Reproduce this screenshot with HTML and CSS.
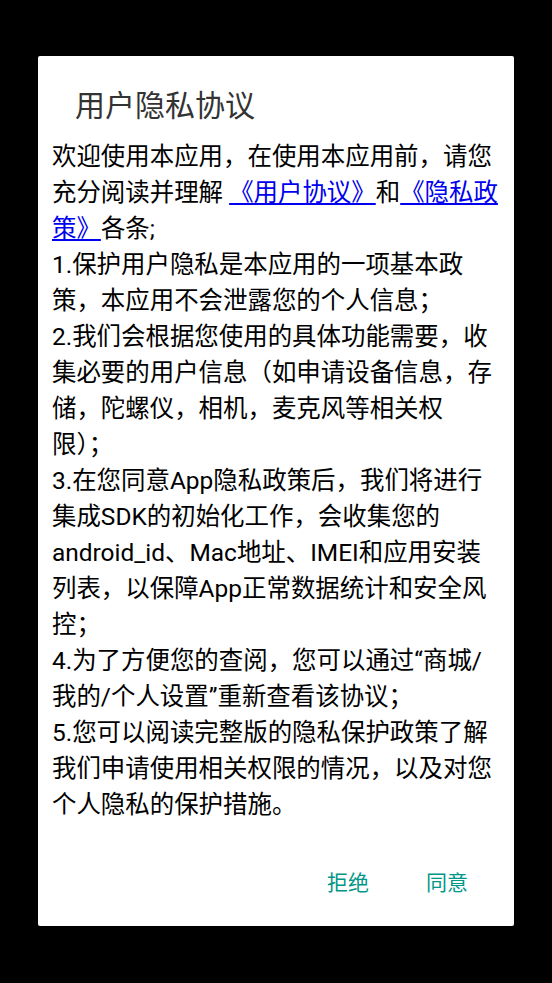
FILE: index.html
```html
<!DOCTYPE html>
<html>
<head>
<meta charset="utf-8">
<link rel="stylesheet" href="styles.css">
</head>
<body>
<div class="dialog">
  <div class="title">用户隐私协议</div>
  <div class="content">欢迎使用本应用，在使用本应用前，请您<br>充分阅读并理解 <a class="link" href="#">《用户协议》</a>和<a class="link" href="#">《隐私政<br>策》</a>各条;<br>1.保护用户隐私是本应用的一项基本政<br>策，本应用不会泄露您的个人信息；<br>2.我们会根据您使用的具体功能需要，收<br>集必要的用户信息（如申请设备信息，存<br>储，陀螺仪，相机，麦克风等相关权<br>限）；<br>3.在您同意App隐私政策后，我们将进行<br>集成SDK的初始化工作，会收集您的<br>android_id、Mac地址、IMEI和应用安装<br>列表，以保障App正常数据统计和安全风<br>控；<br>4.为了方便您的查阅，您可以通过“商城/<br>我的/个人设置”重新查看该协议；<br>5.您可以阅读完整版的隐私保护政策了解<br>我们申请使用相关权限的情况，以及对您<br>个人隐私的保护措施。</div>
  <div class="actions">
    <span class="btn">拒绝</span>
    <span class="btn">同意</span>
  </div>
</div>
</body>
</html>
```
FILE: styles.css
```css
html, body {
  margin: 0;
  padding: 0;
  background: #000;
  width: 552px;
  height: 983px;
  overflow: hidden;
}
body {
  padding-top: 56px;
  box-sizing: border-box;
}
.dialog {
  margin-left: 38px;
  width: 476px;
  height: 870px;
  background: #fff;
  border-radius: 2px;
  box-sizing: border-box;
  padding-top: 32px;
  font-family: Roboto, "Noto Sans CJK SC", sans-serif;
  display: flow-root;
}
.title {
  padding-left: 37px;
  font-size: 30px;
  line-height: 36px;
  color: #333;
}
.content {
  margin-top: 15px;
  padding-left: 14px;
  font-size: 24.45px;
  line-height: 36px;
  color: #000;
  white-space: nowrap;
}
.link {
  color: #0000ee;
  text-decoration: underline;
}
.actions {
  display: flex;
  justify-content: flex-end;
  gap: 57px;
  padding-right: 46px;
  margin-top: 42px;
}
.btn {
  font-size: 21px;
  line-height: 36px;
  color: #009688;
}
```
